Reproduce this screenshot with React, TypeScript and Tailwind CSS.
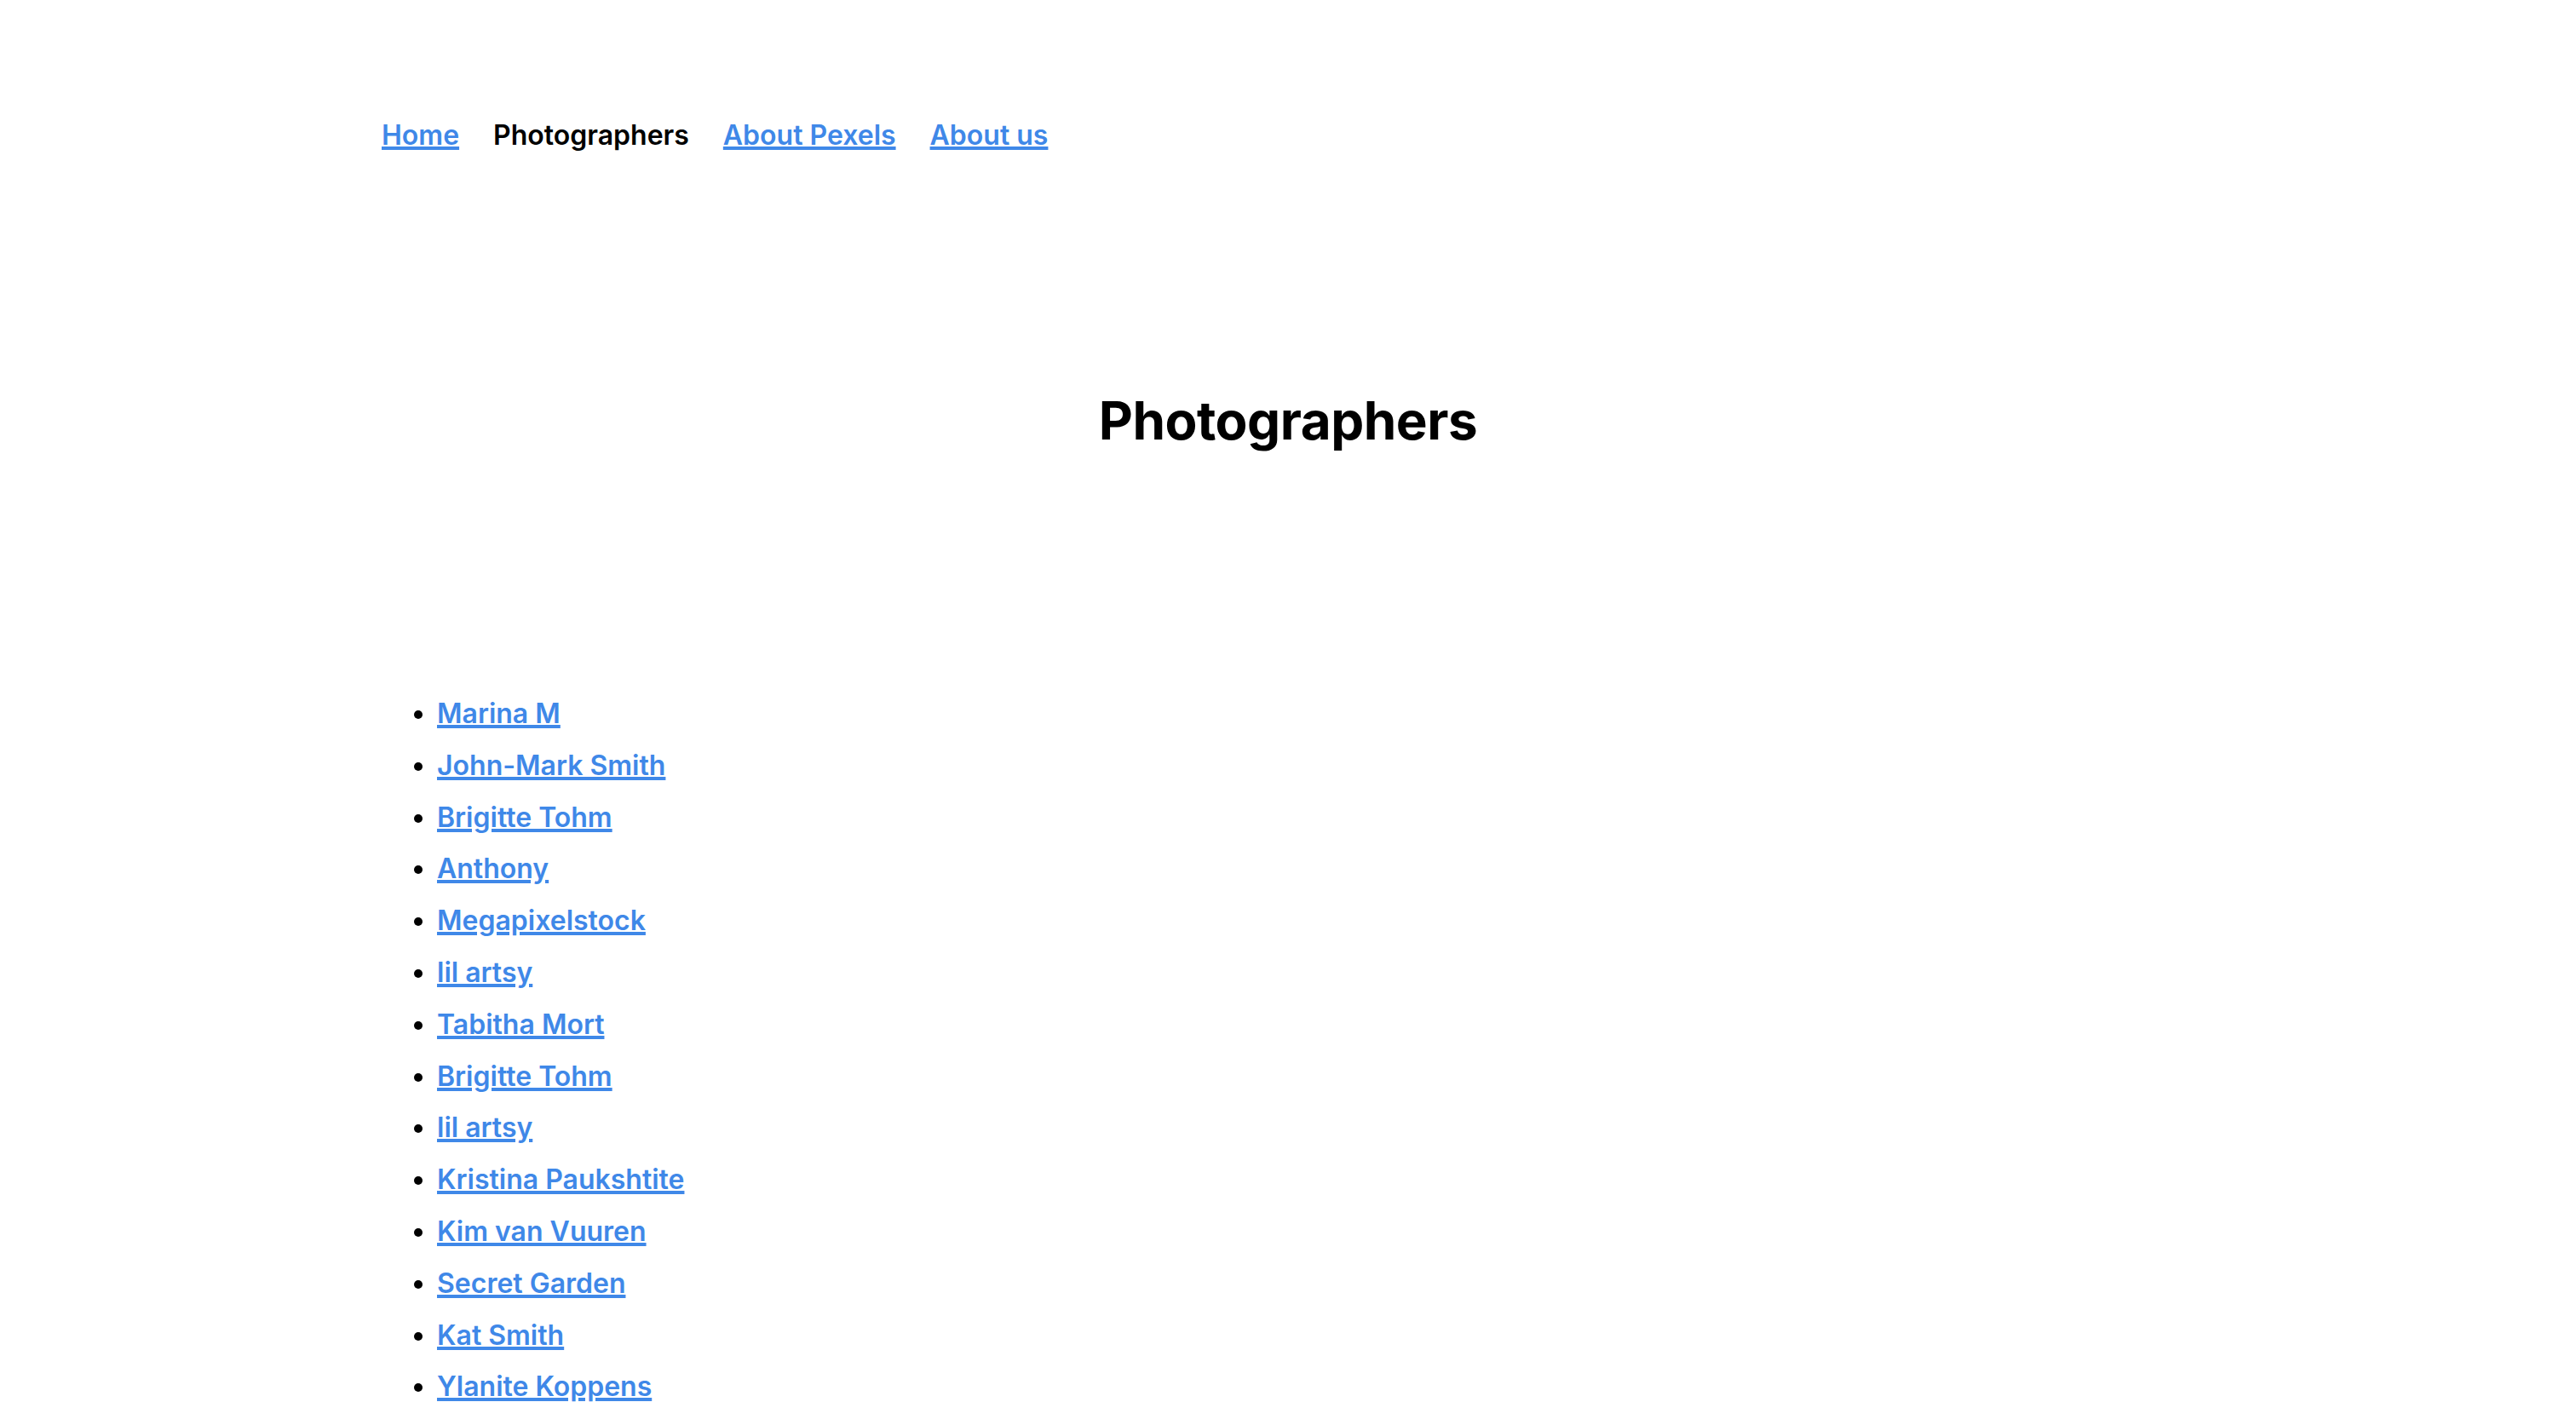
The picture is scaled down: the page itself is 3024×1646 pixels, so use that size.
const photographers = [
    "Marina M",
    "John-Mark Smith",
    "Brigitte Tohm",
    "Anthony",
    "Megapixelstock",
    "lil artsy",
    "Tabitha Mort",
    "Brigitte Tohm",
    "lil artsy",
    "Kristina Paukshtite",
    "Kim van Vuuren",
    "Secret Garden",
    "Kat Smith",
    "Ylanite Koppens",
];

const linkClass = "text-[#3f88e8] underline decoration-[4px] underline-offset-[2px]";

export default function App() {
    return (
        <div className="min-h-screen bg-white text-black" style={{ fontFamily: "Inter, 'Noto Sans', sans-serif" }}>
            <div className="mx-auto w-[2128px]">
                {/* top nav */}
                <nav className="flex gap-[40px] pt-[135px] text-[32px] leading-[48px] font-semibold">
                    <a href="#" className={linkClass}>Home</a>
                    <span>Photographers</span>
                    <a href="#" className={linkClass}>About Pexels</a>
                    <a href="#" className={linkClass}>About us</a>
                </nav>

                <h1 className="mt-[272px] text-center text-[62px] leading-[77px] font-bold tracking-[-0.5px]">
                    Photographers
                </h1>

                <ul className="mt-[276px] list-disc pl-[65px] text-[32px] leading-[60.8px] font-semibold">
                    {photographers.map((name, i) => (
                        <li key={i}>
                            <a href="#" className={linkClass}>{name}</a>
                        </li>
                    ))}
                </ul>
            </div>
        </div>
    );
}
